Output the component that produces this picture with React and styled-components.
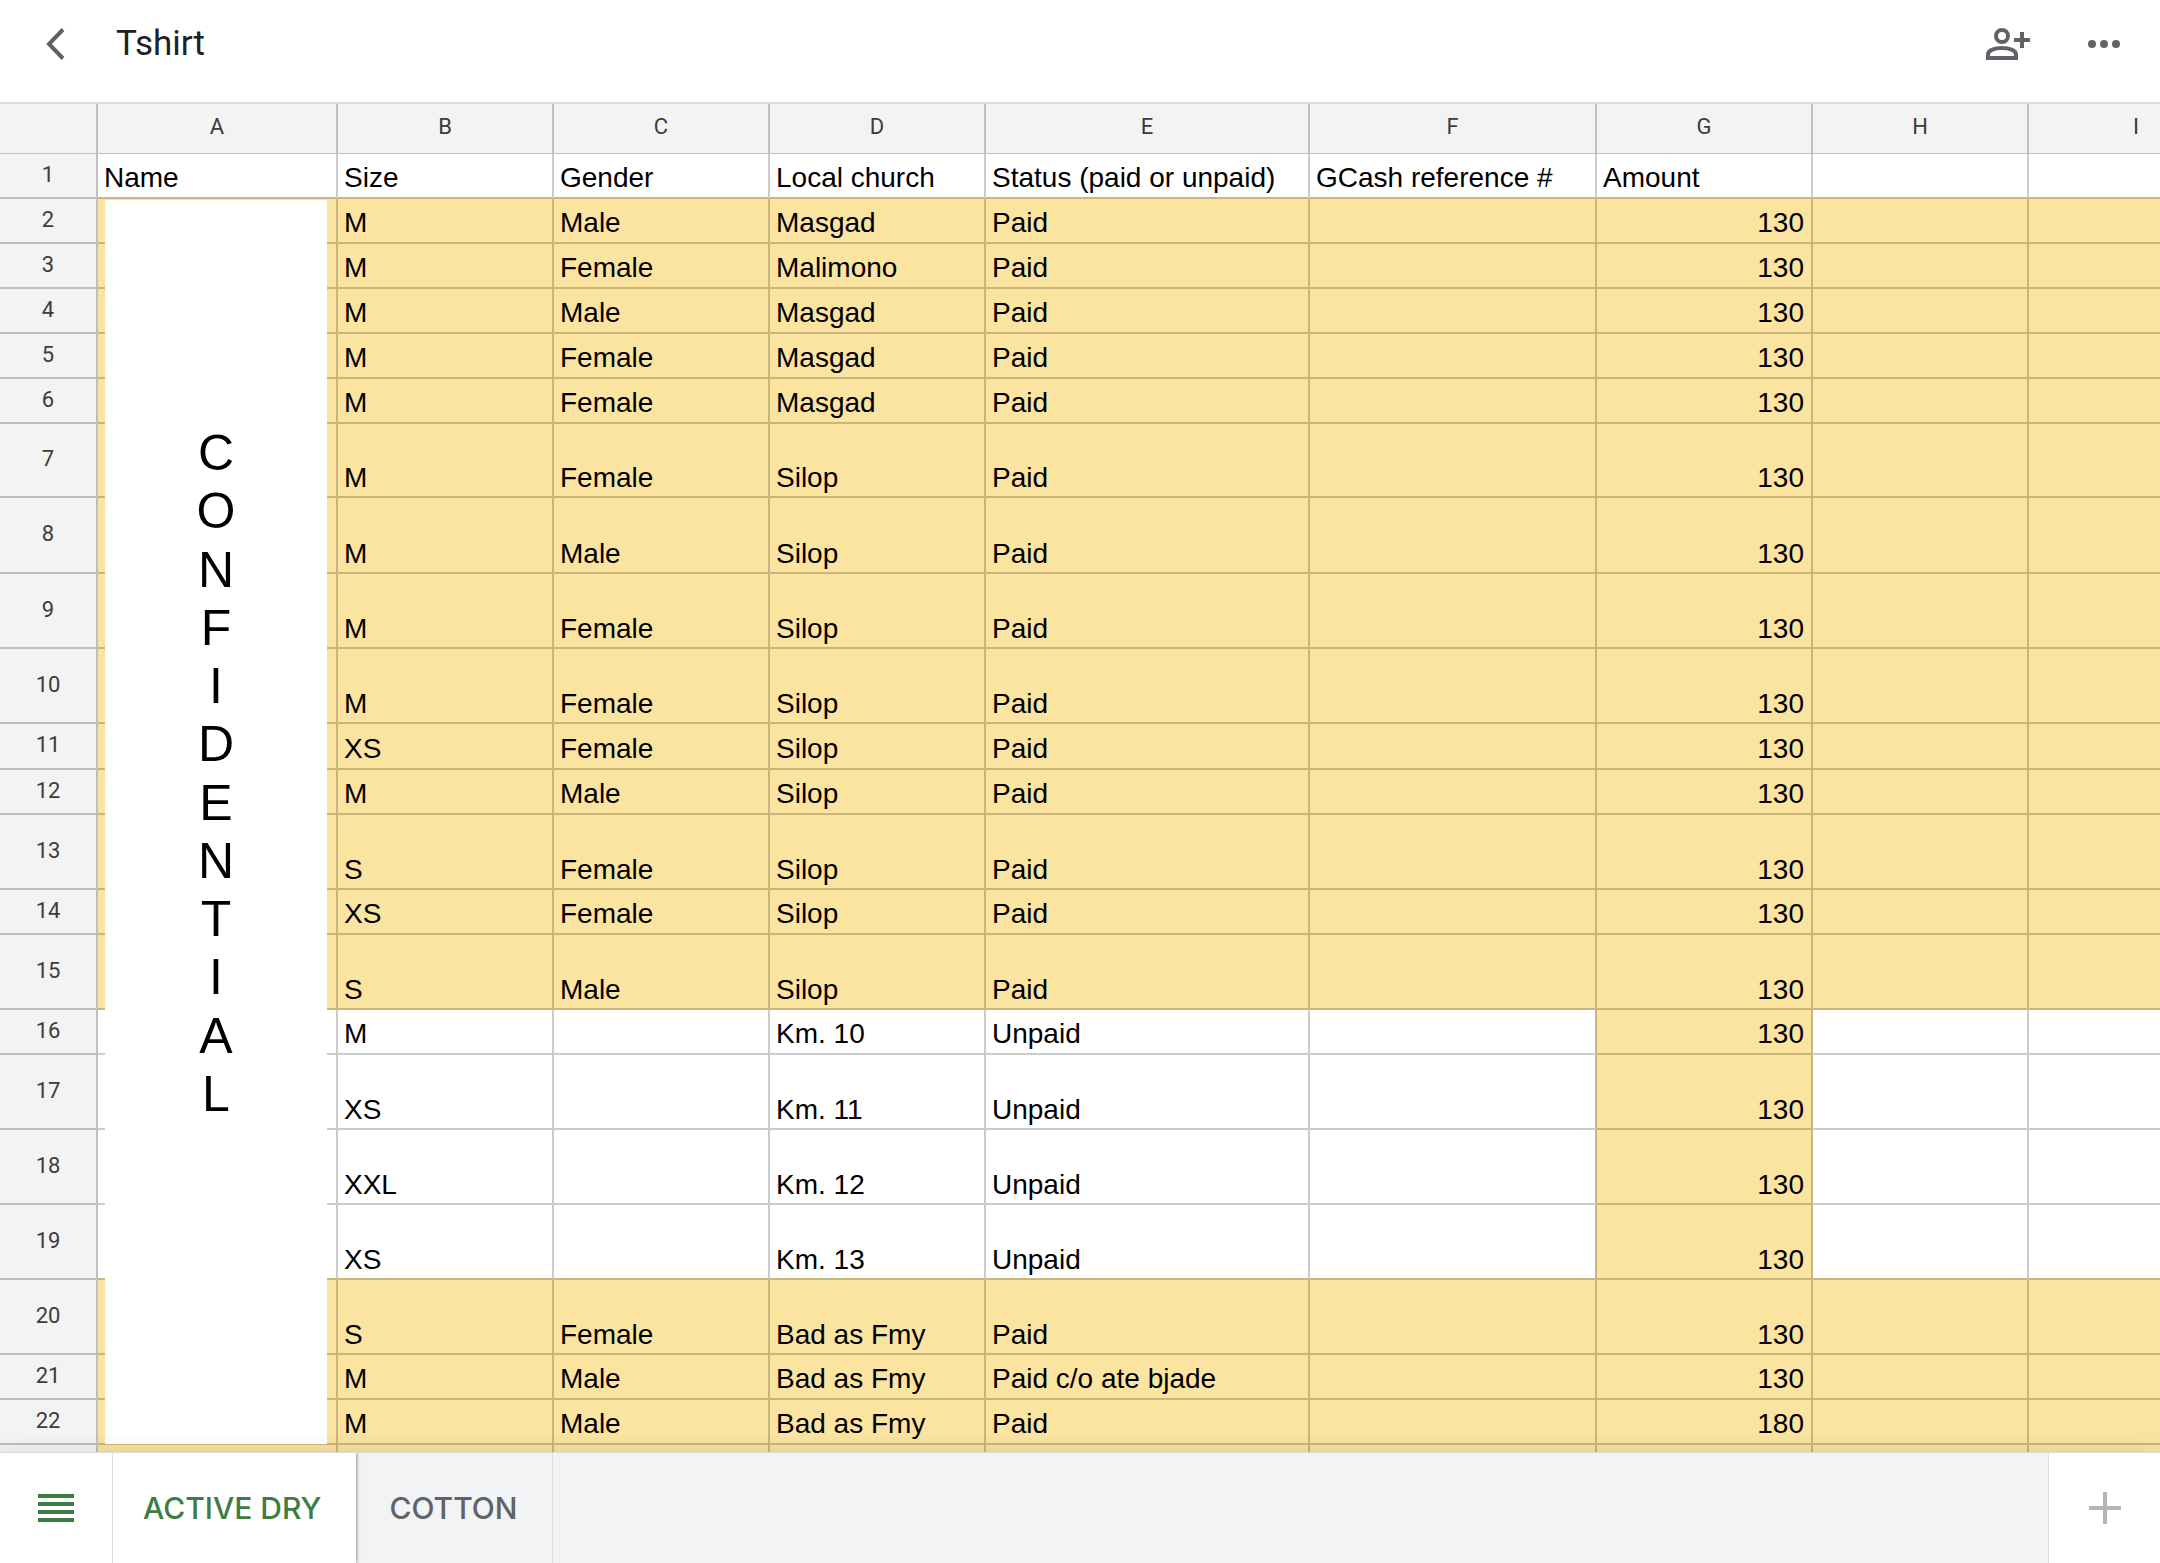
import React from "react";
import styled, { createGlobalStyle } from "styled-components";

const GlobalStyle = createGlobalStyle`
  *, *::before, *::after { box-sizing: border-box; }
  html, body { margin: 0; padding: 0; overflow: hidden; }
  button { font: inherit; color: inherit; background: none; border: 0; padding: 0; margin: 0; cursor: pointer; }
`;

const color = {
  ink: "#202124",
  icon: "#5f6368",
  green: "#3c7d44",
  paid: "#fae4a0",
  paidLine: "#c9b67d",
  line: "#cccccc",
  headerLine: "#c0c0c0",
  headerFill: "#f3f3f3",
  tabFill: "#f1f3f4",
  tabLine: "#dadce0",
};

const Page = styled.div`
  height: 100vh;
  display: flex;
  flex-direction: column;
  background: #fff;
  font-family: Roboto, "Liberation Sans", sans-serif;
`;

const TopBar = styled.header`
  flex: none;
  height: 104px;
  padding: 8px 32px 22px;
  display: flex;
  align-items: center;
  border-bottom: 2px solid #dcdcdc;
`;

const IconButton = styled.button`
  width: 48px;
  height: 48px;
  flex: none;
  display: flex;
  align-items: center;
  justify-content: center;
`;

const Title = styled.h1`
  margin: 0 auto 0 36px;
  font-size: 35px;
  line-height: 44px;
  font-weight: 400;
  color: ${color.ink};
`;

const Actions = styled.div`
  display: flex;
  gap: 48px;
`;

const Sheet = styled.main`
  flex: 1;
  min-height: 0;
  overflow: hidden;
  position: relative;
`;

const Grid = styled.table`
  table-layout: fixed;
  width: 2245px;
  border-collapse: separate;
  border-spacing: 0;
`;

const Col = styled.col`
  width: ${(p) => p.$width}px;
`;

const Row = styled.tr`
  height: ${(p) => p.$height}px;
`;

const HeadCell = styled.th`
  padding: 0 0 ${(p) => (p.scope === "row" ? 2 : 4)}px;
  font-size: 22px;
  line-height: 26px;
  font-weight: 400;
  text-align: center;
  vertical-align: middle;
  color: #3c3c3c;
  background: ${color.headerFill};
  border-right: 2px solid ${color.headerLine};
  border-bottom: ${(p) => (p.scope === "row" ? 2 : 1)}px solid ${color.headerLine};
`;

const Cell = styled.td`
  padding: 0 7px ${(p) => (p.$tall ? 2 : 3)}px 6px;
  font-family: "Liberation Sans", Arial, sans-serif;
  font-size: 28px;
  line-height: 32px;
  color: #000;
  white-space: nowrap;
  vertical-align: bottom;
  text-align: ${(p) => (p.$numeric ? "right" : "left")};
  background: ${(p) => (p.$paid ? color.paid : "#fff")};
  border-right: 2px solid ${(p) => (p.$lineRight ? color.paidLine : color.line)};
  border-bottom: 2px solid ${(p) => (p.$lineBottom ? color.paidLine : color.line)};
`;

const NameCover = styled.div`
  position: absolute;
  top: 96px;
  left: 105px;
  width: 222px;
  height: 1244px;
  padding: 224px 0 321px;
  display: flex;
  flex-direction: column;
  align-items: center;
  justify-content: space-between;
  background: #fff;
  color: #000;
  font-family: "Liberation Sans", Arial, sans-serif;
  font-size: 50px;
  line-height: 58px;
`;

const BottomBar = styled.footer`
  flex: none;
  height: 111px;
  display: flex;
  position: relative;
  background: ${color.tabFill};
  border-top: 1px solid ${color.tabLine};
  box-shadow: 0 0 20px rgba(0, 0, 0, 0.12);
`;

const BarButton = styled.button`
  width: 113px;
  display: flex;
  align-items: center;
  justify-content: center;
  background: #fff;
  border-right: 1px solid ${color.tabLine};
`;

const AddButton = styled(BarButton)`
  width: 112px;
  margin-left: auto;
  border-right: 0;
  border-left: 1px solid ${color.tabLine};
`;

const Tabs = styled.div`
  display: flex;
`;

const Tab = styled.button`
  padding: 0 34px;
  font-family: Inter, Roboto, sans-serif;
  font-size: 30px;
  line-height: 40px;
  font-weight: 500;
  color: ${color.icon};
  background: ${color.tabFill};
  border-right: 1px solid ${color.tabLine};

  &[aria-selected="true"] {
    position: relative;
    padding-left: 30px;
    color: ${color.green};
    background: #fff;
    border-right: 0;
    box-shadow: 1px 0 3px rgba(0, 0, 0, 0.4);
    clip-path: inset(0 -6px 0 0);
  }
`;

const columns = [
  ["A", 240],
  ["B", 216],
  ["C", 216],
  ["D", 216],
  ["E", 324],
  ["F", 287],
  ["G", 216],
  ["H", 216],
  ["I", 216],
];

const AMOUNT = 6;

const rows = [
  [45, ["Name", "Size", "Gender", "Local church", "Status (paid or unpaid)", "GCash reference #", "Amount"]],
  [45, ["", "M", "Male", "Masgad", "Paid", "", "130"]],
  [45, ["", "M", "Female", "Malimono", "Paid", "", "130"]],
  [45, ["", "M", "Male", "Masgad", "Paid", "", "130"]],
  [45, ["", "M", "Female", "Masgad", "Paid", "", "130"]],
  [45, ["", "M", "Female", "Masgad", "Paid", "", "130"]],
  [74, ["", "M", "Female", "Silop", "Paid", "", "130"]],
  [76, ["", "M", "Male", "Silop", "Paid", "", "130"]],
  [75, ["", "M", "Female", "Silop", "Paid", "", "130"]],
  [75, ["", "M", "Female", "Silop", "Paid", "", "130"]],
  [46, ["", "XS", "Female", "Silop", "Paid", "", "130"]],
  [45, ["", "M", "Male", "Silop", "Paid", "", "130"]],
  [75, ["", "S", "Female", "Silop", "Paid", "", "130"]],
  [45, ["", "XS", "Female", "Silop", "Paid", "", "130"]],
  [75, ["", "S", "Male", "Silop", "Paid", "", "130"]],
  [45, ["", "M", "", "Km. 10", "Unpaid", "", "130"]],
  [75, ["", "XS", "", "Km. 11", "Unpaid", "", "130"]],
  [75, ["", "XXL", "", "Km. 12", "Unpaid", "", "130"]],
  [75, ["", "XS", "", "Km. 13", "Unpaid", "", "130"]],
  [75, ["", "S", "Female", "Bad as Fmy", "Paid", "", "130"]],
  [45, ["", "M", "Male", "Bad as Fmy", "Paid c/o ate bjade", "", "130"]],
  [45, ["", "M", "Male", "Bad as Fmy", "Paid", "", "180"]],
  [45, []],
];

const isUnpaid = (r) => r >= 15 && r <= 18;
const isFilled = (r, c) => r > 0 && (!isUnpaid(r) || c === AMOUNT);

function BackIcon() {
  return (
    <svg width="24" height="36" viewBox="0 0 24 36" fill="none" stroke={color.icon} strokeWidth="4" aria-hidden="true">
      <path d="M19 3.500 5 18l14 14.500" />
    </svg>
  );
}

function AddPersonIcon() {
  return (
    <svg width="48" height="48" viewBox="2 0 48 48" fill="none" stroke={color.icon} strokeWidth="4" aria-hidden="true">
      <circle cx="20" cy="16" r="6" />
      <path d="M6 38v-3.500c0-4.500 7-6.500 14-6.500s14 2 14 6.500V38z" />
      <path d="M40 12v16M32 20h16" />
    </svg>
  );
}

function MoreIcon() {
  return (
    <svg width="32" height="8" viewBox="0 0 32 8" fill={color.icon} aria-hidden="true">
      <circle cx="4" cy="4" r="4" />
      <circle cx="16" cy="4" r="4" />
      <circle cx="28" cy="4" r="4" />
    </svg>
  );
}

function SheetsIcon() {
  return (
    <svg width="36" height="28" viewBox="0 0 36 28" fill={color.green} aria-hidden="true">
      <path d="M0 0h36v4H0zM0 8h36v4H0zM0 16h36v4H0zM0 24h36v4H0z" />
    </svg>
  );
}

function PlusIcon() {
  return (
    <svg width="32" height="32" viewBox="0 0 32 32" fill="#b5b5b5" aria-hidden="true">
      <path d="M14 0h4v14h14v4H18v14h-4V18H0v-4h14z" />
    </svg>
  );
}

export default function App() {
  return (
    <Page>
      <GlobalStyle />
      <TopBar>
        <IconButton aria-label="Back"><BackIcon /></IconButton>
        <Title>Tshirt</Title>
        <Actions>
          <IconButton aria-label="Share"><AddPersonIcon /></IconButton>
          <IconButton aria-label="More"><MoreIcon /></IconButton>
        </Actions>
      </TopBar>
      <Sheet>
        <Grid>
          <colgroup>
            <Col $width={98} />
            {columns.map(([name, width]) => <Col key={name} $width={width} />)}
          </colgroup>
          <thead>
            <Row $height={50}>
              <HeadCell as="td" />
              {columns.map(([name]) => <HeadCell key={name} scope="col">{name}</HeadCell>)}
            </Row>
          </thead>
          <tbody>
            {rows.map(([height, values], r) => (
              <Row key={r} $height={height}>
                <HeadCell scope="row">{values.length > 0 && r + 1}</HeadCell>
                {columns.map(([name], c) => (
                  <Cell
                    key={name}
                    $tall={height > 50}
                    $numeric={r > 0 && c === AMOUNT}
                    $paid={isFilled(r, c)}
                    $lineRight={isFilled(r, c) || isFilled(r, c + 1)}
                    $lineBottom={isFilled(r, c) || isFilled(r + 1, c)}
                  >
                    {values[c]}
                  </Cell>
                ))}
              </Row>
            ))}
          </tbody>
        </Grid>
        <NameCover>
          {[..."CONFIDENTIAL"].map((letter, i) => <span key={i}>{letter}</span>)}
        </NameCover>
      </Sheet>
      <BottomBar>
        <BarButton aria-label="All sheets"><SheetsIcon /></BarButton>
        <Tabs role="tablist">
          <Tab role="tab" aria-selected={true}>ACTIVE DRY</Tab>
          <Tab role="tab" aria-selected={false}>COTTON</Tab>
        </Tabs>
        <AddButton aria-label="Add sheet"><PlusIcon /></AddButton>
      </BottomBar>
    </Page>
  );
}
